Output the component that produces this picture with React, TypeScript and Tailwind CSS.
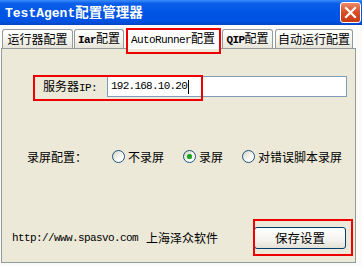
import React from 'react'

const cjk = "font-['Noto_Sans_CJK_SC','Noto_Sans',sans-serif]"
const mono = "font-['Liberation_Mono','Noto_Sans_CJK_SC',monospace]"

type Tab = { label: React.ReactNode; w: string; ml: string; active?: boolean }

const tabs: Tab[] = [
  { label: '运行器配置', w: 'w-[71px]', ml: 'ml-[2px]' },
  { label: <><span className={mono + ' text-[11px] tracking-[-0.6px] font-bold'}>Iar</span>配置</>, w: 'w-[50px]', ml: 'ml-[1px]' },
  { label: <><span className={mono + ' text-[11px] tracking-[-0.6px]'}>AutoRunner</span>配置</>, w: 'w-[94px]', ml: 'ml-[2px]', active: true },
  { label: <><span className={mono + ' text-[11px] tracking-[-0.6px] font-bold'}>QIP</span>配置</>, w: 'w-[51px]', ml: 'ml-[2px]' },
  { label: '自动运行配置', w: 'w-[78px]', ml: 'ml-[2px]' },
]

function Radio({ checked }: { checked?: boolean }) {
  return (
    <span className="w-[13px] h-[13px] rounded-full border border-[#1C5180] bg-[linear-gradient(135deg,#D8D5C2,#FFFFFF_70%)] flex items-center justify-center shrink-0">
      {checked && <span className="w-[5px] h-[5px] rounded-full bg-[#21A121] shadow-[0_0_1px_#5FD35F]" />}
    </span>
  )
}

export default function App() {
  return (
    <div className={'w-[362px] h-[266px] bg-[#FBFBF9] flex flex-col overflow-hidden text-black ' + cjk}>
      {/* title bar */}
      <div className="h-[25px] shrink-0 flex items-center justify-between bg-[linear-gradient(180deg,#3C8CF9_0%,#0A5EE8_14%,#0055E5_50%,#0052E2_85%,#0046C6_100%)]">
        <div className="ml-[5px] flex items-baseline text-white font-bold leading-none">
          <span className={mono + ' text-[13px] font-bold'}>TestAgent</span>
          <span className="text-[13.5px]">配置管理器</span>
        </div>
        <div className="mr-[1px] w-[21px] h-[21px] rounded-[3px] border border-white bg-[linear-gradient(180deg,#EC8A6A,#D94D24_50%,#C63A12)] flex items-center justify-center">
          <svg width="13" height="13" viewBox="0 0 13 13">
            <path d="M2 2 L11 11 M11 2 L2 11" stroke="white" strokeWidth="2.2" strokeLinecap="square" />
          </svg>
        </div>
      </div>

      {/* tab strip */}
      <div className="h-[23px] shrink-0 flex items-end">
        {tabs.map((t, i) => (
          <div
            key={i}
            className={
              t.w + ' ' + t.ml + ' relative flex items-center justify-center text-[12px] leading-none border border-b-0 border-[#919B9C] rounded-t-[3px] ' +
              (t.active ? 'h-[21px] -mb-[1px] bg-white z-10' : 'h-[19px] bg-[linear-gradient(180deg,#FFFFFF,#F3F2EC_60%,#E6E4D8)]')
            }
          >
            <span className="flex items-baseline">{t.label}</span>
            {t.active && <span className="absolute -left-[1px] -right-[2px] -top-[1px] h-[26px] border-2 border-[#EE0000]" />}
          </div>
        ))}
      </div>

      {/* panel */}
      <div className="ml-[1px] w-[355px] h-[215px] shrink-0 border border-[#919B9C] bg-[#ECE9D8] flex flex-col text-[12px] leading-none">
        {/* server ip */}
        <div className="relative mt-[27px] h-[21px] flex items-center">
          <span className="ml-[41px] w-[64px] flex items-baseline">
            服务器<span className={mono + ' text-[11px] tracking-[-0.6px]'}>IP:</span>
          </span>
          <div className="w-[240px] h-[21px] border border-[#7F9DB9] bg-white flex items-center pl-[3px]">
            <span className={mono + ' text-[11px] tracking-[-0.75px]'}>192.168.10.20</span>
            <span className="ml-[1px] w-[1px] h-[14px] bg-black" />
          </div>
          <span className="absolute left-[31px] -top-[1px] w-[170px] h-[26px] border-2 border-[#EE0000]" />
        </div>

        {/* record option */}
        <div className="mt-[53px] h-[13px] flex items-center">
          <span className="ml-[25px] w-[85px]">录屏配置：</span>
          <Radio />
          <span className="ml-[3px] w-[55px]">不录屏</span>
          <Radio checked />
          <span className="ml-[3px] w-[43px]">录屏</span>
          <Radio />
          <span className="ml-[3px]">对错误脚本录屏</span>
        </div>

        {/* footer */}
        <div className="mt-[64px] h-[22px] flex items-center">
          <span className={mono + ' ml-[10px] text-[11px] tracking-[-0.6px]'}>http://www.spasvo.com</span>
          <span className="ml-[8px]">上海泽众软件</span>
          <div className="relative ml-auto mr-[9px]">
            <button className="w-[92px] h-[22px] rounded-[3px] border border-[#003C74] bg-[linear-gradient(180deg,#FFFFFF,#F4F3EE_60%,#E3E1D6)] text-[12.5px] leading-none">
              保存设置
            </button>
            <span className="absolute -left-[1px] -top-[8px] -right-[7px] -bottom-[7px] border-2 border-[#EE0000]" />
          </div>
        </div>
      </div>
    </div>
  )
}
